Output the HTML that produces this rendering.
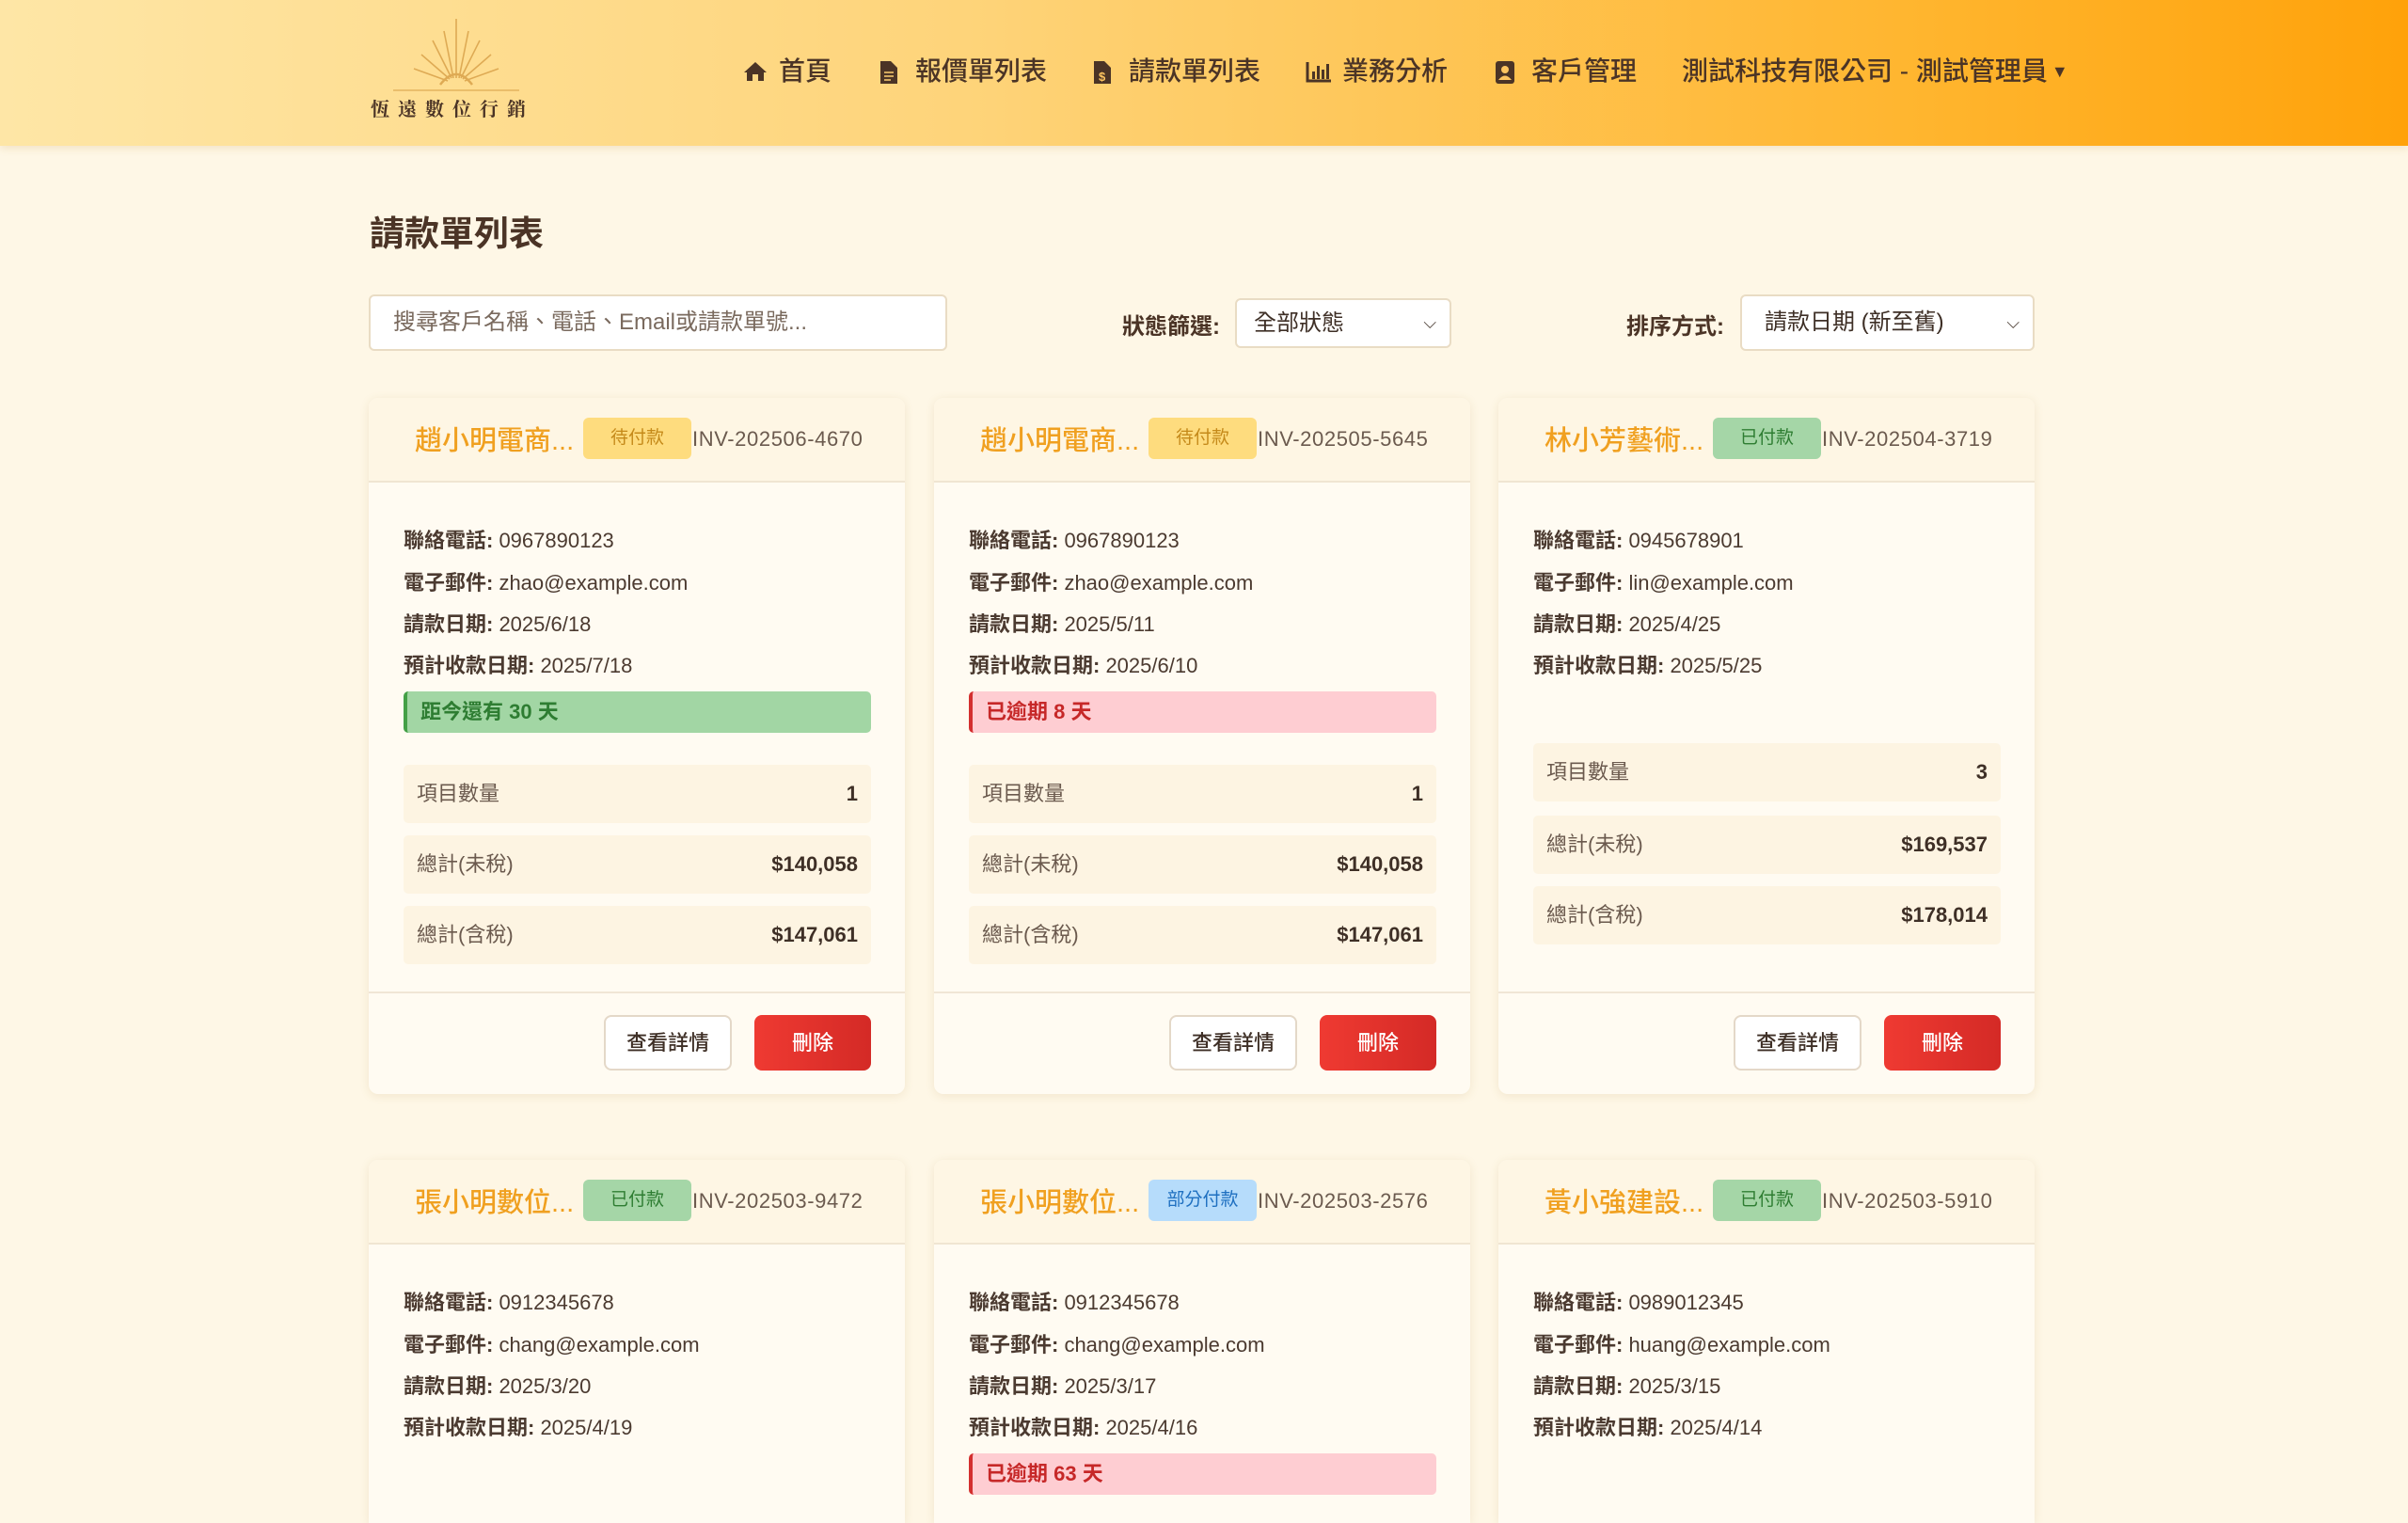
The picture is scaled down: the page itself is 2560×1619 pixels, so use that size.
<!DOCTYPE html>
<html style="height:1619px;overflow:hidden"><head><meta charset="utf-8">
<style>
*{box-sizing:border-box;margin:0;padding:0}
body{width:2560px;height:1619px;overflow:hidden;background:#fef7e6;font-family:"Liberation Sans","Noto Sans CJK TC",sans-serif;color:#4a3a2e;position:relative}
.hdr{position:absolute;left:0;top:0;width:2560px;height:155px;background:linear-gradient(90deg,#fee6a6 0%,#fed47a 40%,#ffb52e 80%,#ffa20a 100%);box-shadow:0 3px 8px rgba(180,120,20,.15)}
.nav{position:absolute;top:56px;font-size:28px;font-weight:500;color:#4b3426;white-space:nowrap;line-height:40px}
.nav svg{position:absolute;top:8px}
.title{position:absolute;left:393px;top:218px;font-size:37px;font-weight:700;color:#4b3426}
.inp{position:absolute;border:2px solid #e9dcc4;background:#fff;border-radius:6px;font-size:24px;color:#7a6a5e;padding-left:24px;line-height:56px}
.lbl{position:absolute;font-size:24px;font-weight:700;color:#4b3426}
.card{position:absolute;width:570px;height:740px;background:#fffbf2;border-radius:10px;box-shadow:0 2px 10px rgba(170,130,60,.14);overflow:hidden}
.ch{position:absolute;left:0;top:0;width:100%;height:90px;background:#fef6e4;border-bottom:2px solid #f0e5d2}
.nm{position:absolute;left:49px;top:22px;font-size:29px;font-weight:500;color:#f0a020}
.bd{position:absolute;top:21px;width:115px;height:44px;border-radius:6px;font-size:19px;text-align:center;line-height:44px}
.inv{position:absolute;left:344px;top:31px;font-size:22px;letter-spacing:0.6px;color:#6b5a4e}
.ln{position:absolute;left:37px;font-size:22px;color:#4b3a30}
.ln b{font-weight:700}
.cd{position:absolute;left:37px;top:312px;width:497px;height:44px;border-radius:5px;font-size:22px;font-weight:700;line-height:44px;padding-left:14px}
.row{position:absolute;left:37px;width:497px;height:62px;background:#fdf4e2;border-radius:5px;font-size:22px;color:#6b5a4e;line-height:62px;padding:0 14px}
.row b{float:right;color:#3e2f26}
.ft{position:absolute;left:0;top:631px;width:100%;height:2px;background:#f0e6d6}
.b1{position:absolute;left:250px;top:656px;width:136px;height:59px;border:2px solid #e4d8c8;background:#fff;border-radius:8px;font-size:22px;text-align:center;line-height:55px;color:#3e2f26;font-weight:500}
.b2{position:absolute;left:410px;top:656px;width:124px;height:59px;background:linear-gradient(90deg,#ef3a32,#d42a26);border-radius:8px;font-size:22px;color:#fff;text-align:center;line-height:59px;font-weight:500}
.r2{height:386px;border-radius:10px 10px 0 0}
</style></head><body>
<div class="hdr">
<svg style="position:absolute;left:410px;top:18px" width="150" height="80" viewBox="0 0 150 80">
<g stroke="#d9a24a" stroke-width="1.6" fill="none" opacity=".85">
<line x1="75" y1="65" x2="75" y2="2"/><line x1="72" y1="65" x2="62" y2="15"/><line x1="78" y1="65" x2="88" y2="15"/>
<line x1="70" y1="65" x2="50" y2="25"/><line x1="80" y1="65" x2="100" y2="25"/>
<line x1="68" y1="66" x2="38" y2="40"/><line x1="82" y1="66" x2="112" y2="40"/>
<line x1="66" y1="68" x2="30" y2="55"/><line x1="84" y1="68" x2="120" y2="55"/>
<path d="M58 72 Q75 50 92 72" stroke-width="2.5"/>
<line x1="8" y1="78" x2="142" y2="78" stroke-width="1.2"/></g></svg>
<div style="position:absolute;left:394px;top:100px;font-family:'Noto Serif CJK SC',serif;font-size:20px;letter-spacing:9px;color:#4b3426;font-weight:700">恆遠數位行銷</div>
<div class="nav" style="left:789px"><svg width="28" height="24" viewBox="0 0 28 24"><path d="M14 2 L2 13 L5 13 L5 22 L11 22 L11 15 L17 15 L17 22 L23 22 L23 13 L26 13 Z" fill="#4b3426"/></svg><span style="margin-left:39px">首頁</span></div>
<div class="nav" style="left:934px"><svg width="22" height="26" viewBox="0 0 22 26"><path d="M2 1 H13 L20 8 V25 H2 Z" fill="#4b3426"/><path d="M6 13 H16 M6 17 H16 M6 21 H13" stroke="#fecf70" stroke-width="1.6"/></svg><span style="margin-left:39px">報價單列表</span></div>
<div class="nav" style="left:1161px"><svg width="22" height="26" viewBox="0 0 22 26"><path d="M2 1 H13 L20 8 V25 H2 Z" fill="#4b3426"/><text x="7" y="22" font-size="13" fill="#fec560" font-family="Liberation Sans" font-weight="700">$</text></svg><span style="margin-left:39px">請款單列表</span></div>
<div class="nav" style="left:1388px"><svg width="28" height="24" viewBox="0 0 28 24"><path d="M2 2 V22 H27" stroke="#4b3426" stroke-width="3" fill="none"/><rect x="7" y="12" width="3" height="8" fill="#4b3426"/><rect x="12" y="6" width="3" height="14" fill="#4b3426"/><rect x="17" y="10" width="3" height="10" fill="#4b3426"/><rect x="22" y="4" width="3" height="16" fill="#4b3426"/></svg><span style="margin-left:39px">業務分析</span></div>
<div class="nav" style="left:1589px"><svg width="22" height="26" viewBox="0 0 22 26"><rect x="1" y="1" width="20" height="24" rx="3" fill="#4b3426"/><circle cx="11" cy="10" r="4" fill="#fec560"/><path d="M4 21 Q11 12 18 21 Z" fill="#fec560"/></svg><span style="margin-left:39px">客戶管理</span></div>
<div class="nav" style="left:1788px">測試科技有限公司 - 測試管理員<span style="font-size:18px;margin-left:4px;position:relative;top:-3px">▼</span></div>
</div>
<div class="title">請款單列表</div>
<div class="inp" style="left:392px;top:313px;width:615px;height:60px">搜尋客戶名稱、電話、Email或請款單號...</div>
<div class="lbl" style="left:1193px;top:327px">狀態篩選:</div>
<div class="inp" style="left:1313px;top:317px;width:230px;height:53px;line-height:49px;padding-left:18px;color:#3e2f26">全部狀態<span style="position:absolute;right:14px;font-size:18px">⌵</span></div>
<div class="lbl" style="left:1729px;top:327px">排序方式:</div>
<div class="inp" style="left:1850px;top:313px;width:313px;height:60px;color:#3e2f26">請款日期 (新至舊)<span style="position:absolute;right:14px;font-size:18px">⌵</span></div>

<div class="card" style="left:392px;top:423px">
<div class="ch"><div class="nm">趙小明電商...</div><div class="bd" style="left:228px;background:#fedc7e;color:#c58a1a">待付款</div><div class="inv">INV-202506-4670</div></div>
<div class="ln" style="top:134px"><b>聯絡電話:</b> 0967890123</div>
<div class="ln" style="top:179px"><b>電子郵件:</b> zhao@example.com</div>
<div class="ln" style="top:223px"><b>請款日期:</b> 2025/6/18</div>
<div class="ln" style="top:267px"><b>預計收款日期:</b> 2025/7/18</div>
<div class="cd" style="background:#a2d6a4;color:#2e7d32;border-left:4px solid #43a047">距今還有 30 天</div>
<div class="row" style="top:390px">項目數量<b>1</b></div>
<div class="row" style="top:465px">總計(未稅)<b>$140,058</b></div>
<div class="row" style="top:540px">總計(含稅)<b>$147,061</b></div>
<div class="ft"></div><div class="b1">查看詳情</div><div class="b2">刪除</div>
</div>
<div class="card" style="left:993px;top:423px">
<div class="ch"><div class="nm">趙小明電商...</div><div class="bd" style="left:228px;background:#fedc7e;color:#c58a1a">待付款</div><div class="inv">INV-202505-5645</div></div>
<div class="ln" style="top:134px"><b>聯絡電話:</b> 0967890123</div>
<div class="ln" style="top:179px"><b>電子郵件:</b> zhao@example.com</div>
<div class="ln" style="top:223px"><b>請款日期:</b> 2025/5/11</div>
<div class="ln" style="top:267px"><b>預計收款日期:</b> 2025/6/10</div>
<div class="cd" style="background:#fecdd2;color:#c62828;border-left:4px solid #d32f2f">已逾期 8 天</div>
<div class="row" style="top:390px">項目數量<b>1</b></div>
<div class="row" style="top:465px">總計(未稅)<b>$140,058</b></div>
<div class="row" style="top:540px">總計(含稅)<b>$147,061</b></div>
<div class="ft"></div><div class="b1">查看詳情</div><div class="b2">刪除</div>
</div>
<div class="card" style="left:1593px;top:423px">
<div class="ch"><div class="nm">林小芳藝術...</div><div class="bd" style="left:228px;background:#a5d6a7;color:#2e7d32">已付款</div><div class="inv">INV-202504-3719</div></div>
<div class="ln" style="top:134px"><b>聯絡電話:</b> 0945678901</div>
<div class="ln" style="top:179px"><b>電子郵件:</b> lin@example.com</div>
<div class="ln" style="top:223px"><b>請款日期:</b> 2025/4/25</div>
<div class="ln" style="top:267px"><b>預計收款日期:</b> 2025/5/25</div>
<div class="row" style="top:367px">項目數量<b>3</b></div>
<div class="row" style="top:444px">總計(未稅)<b>$169,537</b></div>
<div class="row" style="top:519px">總計(含稅)<b>$178,014</b></div>
<div class="ft"></div><div class="b1">查看詳情</div><div class="b2">刪除</div>
</div>

<div class="card r2" style="left:392px;top:1233px">
<div class="ch"><div class="nm">張小明數位...</div><div class="bd" style="left:228px;background:#a5d6a7;color:#2e7d32">已付款</div><div class="inv">INV-202503-9472</div></div>
<div class="ln" style="top:134px"><b>聯絡電話:</b> 0912345678</div>
<div class="ln" style="top:179px"><b>電子郵件:</b> chang@example.com</div>
<div class="ln" style="top:223px"><b>請款日期:</b> 2025/3/20</div>
<div class="ln" style="top:267px"><b>預計收款日期:</b> 2025/4/19</div>
</div>
<div class="card r2" style="left:993px;top:1233px">
<div class="ch"><div class="nm">張小明數位...</div><div class="bd" style="left:228px;background:#b6dcfb;color:#1e6fc0">部分付款</div><div class="inv">INV-202503-2576</div></div>
<div class="ln" style="top:134px"><b>聯絡電話:</b> 0912345678</div>
<div class="ln" style="top:179px"><b>電子郵件:</b> chang@example.com</div>
<div class="ln" style="top:223px"><b>請款日期:</b> 2025/3/17</div>
<div class="ln" style="top:267px"><b>預計收款日期:</b> 2025/4/16</div>
<div class="cd" style="background:#fecdd2;color:#c62828;border-left:4px solid #d32f2f">已逾期 63 天</div>
</div>
<div class="card r2" style="left:1593px;top:1233px">
<div class="ch"><div class="nm">黃小強建設...</div><div class="bd" style="left:228px;background:#a5d6a7;color:#2e7d32">已付款</div><div class="inv">INV-202503-5910</div></div>
<div class="ln" style="top:134px"><b>聯絡電話:</b> 0989012345</div>
<div class="ln" style="top:179px"><b>電子郵件:</b> huang@example.com</div>
<div class="ln" style="top:223px"><b>請款日期:</b> 2025/3/15</div>
<div class="ln" style="top:267px"><b>預計收款日期:</b> 2025/4/14</div>
</div>
</body></html>
